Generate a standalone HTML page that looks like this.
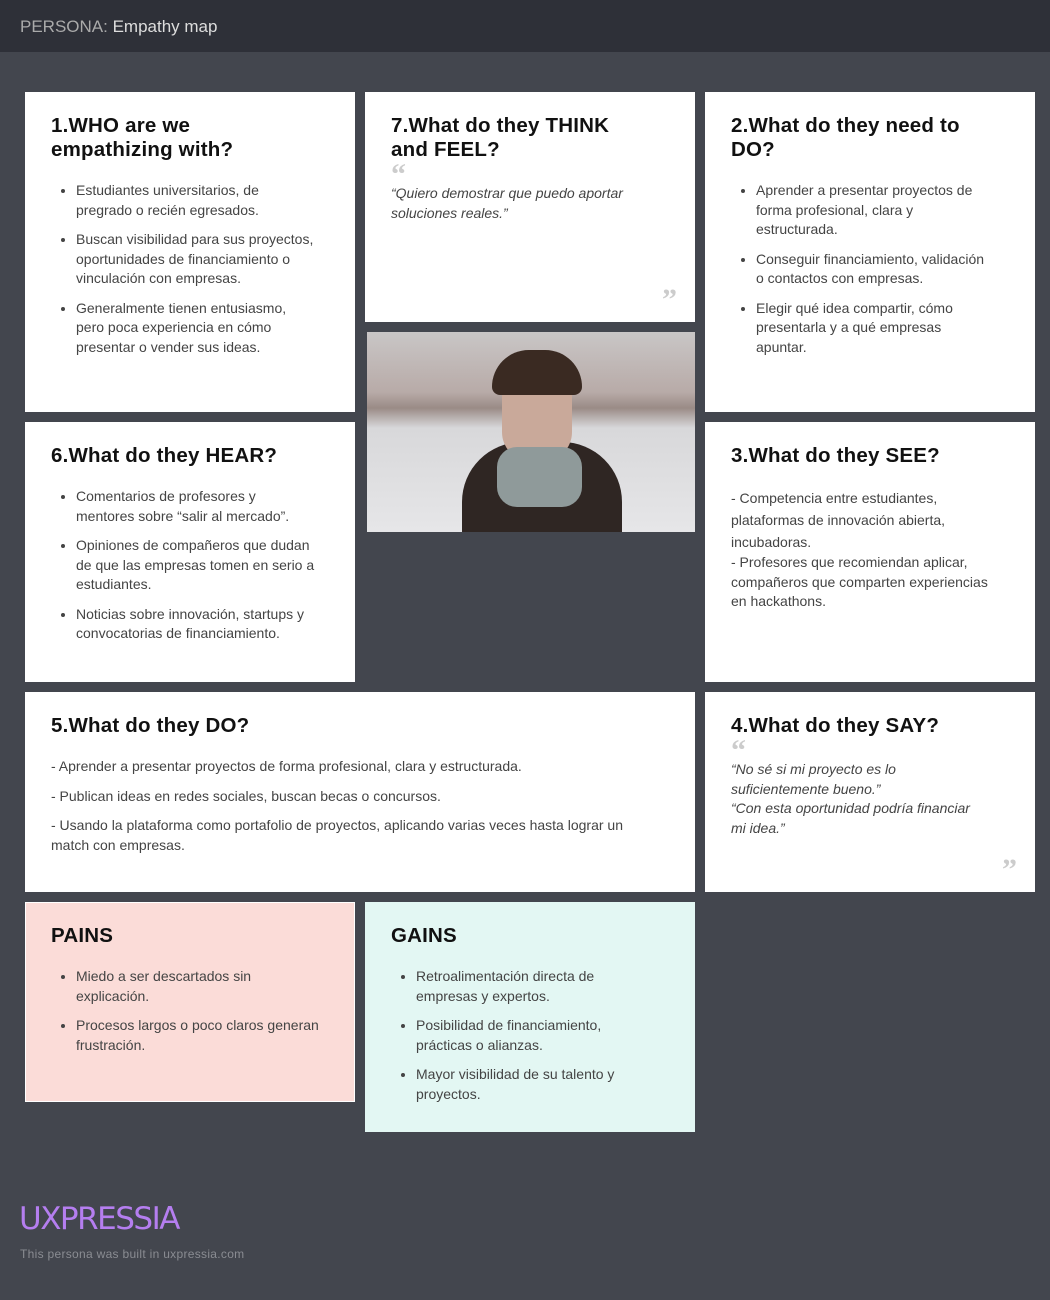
<!DOCTYPE html>
<html><head><meta charset="utf-8"><style>
*{margin:0;padding:0;box-sizing:border-box}
body{width:1050px;height:1300px;background:#43464e;font-family:"Liberation Sans",sans-serif;position:relative;overflow:hidden}
.hdr{position:absolute;left:0;top:0;width:1050px;height:52px;background:#2e3038;color:#ddd;font-size:17px;padding:17px 20px}
.hdr span{color:#aaa}
.c{position:absolute;background:#fff;padding:22px 26px;white-space:nowrap}
.c h2{font-size:20.5px;font-weight:bold;color:#111;line-height:24px;margin-bottom:19px;letter-spacing:0.2px}
.c ul{padding-left:25px;font-size:14px;color:#444;line-height:19.5px}
.c li{margin-bottom:10px}
.c p{font-size:14px;color:#444;line-height:19.5px}
.q{font-style:italic}
.qm{color:#ccc;font-size:30px;font-family:"Liberation Serif",serif;line-height:14px;height:16px;font-weight:bold;margin-top:2px}
.qe{position:absolute;right:18px;bottom:12px;color:#ccc;font-size:30px;font-family:"Liberation Serif",serif;font-weight:bold;line-height:20px}
</style></head><body>
<div class="hdr"><span>PERSONA:</span> Empathy map</div>
<div class="c" style="left:25px;top:92px;width:330px;height:320px"><h2>1.WHO are we<br>empathizing with?</h2><ul><li>Estudiantes universitarios, de<br>pregrado o recién egresados.</li><li>Buscan visibilidad para sus proyectos,<br>oportunidades de financiamiento o<br>vinculación con empresas.</li><li>Generalmente tienen entusiasmo,<br>pero poca experiencia en cómo<br>presentar o vender sus ideas.</li></ul></div>
<div class="c" style="left:365px;top:92px;width:330px;height:230px"><h2 style="margin-bottom:6px">7.What do they THINK<br>and FEEL?</h2><div class="qm">“</div><p class="q">“Quiero demostrar que puedo aportar<br>soluciones reales.”</p><div class="qe">”</div></div>
<div style="position:absolute;left:367px;top:332px;width:328px;height:200px;background:linear-gradient(180deg,#c9c6c6 0%,#b8aba8 30%,#9a8b86 38%,#d8d8da 48%,#e6e6e8 100%);overflow:hidden">
<div style="position:absolute;left:95px;top:110px;width:160px;height:110px;background:#2f2623;border-radius:60px 60px 0 0"></div>
<div style="position:absolute;left:135px;top:30px;width:70px;height:100px;background:#c9a99a;border-radius:35px 35px 30px 30px"></div>
<div style="position:absolute;left:125px;top:18px;width:90px;height:45px;background:#3a2a22;border-radius:45px 45px 10px 10px"></div>
<div style="position:absolute;left:130px;top:115px;width:85px;height:60px;background:#8f9a9a;border-radius:20px"></div>
</div>
<div class="c" style="left:705px;top:92px;width:330px;height:320px"><h2>2.What do they need to<br>DO?</h2><ul><li>Aprender a presentar proyectos de<br>forma profesional, clara y<br>estructurada.</li><li>Conseguir financiamiento, validación<br>o contactos con empresas.</li><li>Elegir qué idea compartir, cómo<br>presentarla y a qué empresas<br>apuntar.</li></ul></div>
<div class="c" style="left:25px;top:422px;width:330px;height:260px"><h2>6.What do they HEAR?</h2><ul><li>Comentarios de profesores y<br>mentores sobre “salir al mercado”.</li><li>Opiniones de compañeros que dudan<br>de que las empresas tomen en serio a<br>estudiantes.</li><li>Noticias sobre innovación, startups y<br>convocatorias de financiamiento.</li></ul></div>
<div class="c" style="left:705px;top:422px;width:330px;height:260px"><h2>3.What do they SEE?</h2><p><span style="line-height:22px">- Competencia entre estudiantes,<br>plataformas de innovación abierta,<br>incubadoras.</span><br>- Profesores que recomiendan aplicar,<br>compañeros que comparten experiencias<br>en hackathons.</p></div>
<div class="c" style="left:25px;top:692px;width:670px;height:200px"><h2>5.What do they DO?</h2><p style="margin-bottom:10px">- Aprender a presentar proyectos de forma profesional, clara y estructurada.</p><p style="margin-bottom:10px">- Publican ideas en redes sociales, buscan becas o concursos.</p><p>- Usando la plataforma como portafolio de proyectos, aplicando varias veces hasta lograr un<br>match con empresas.</p></div>
<div class="c" style="left:705px;top:692px;width:330px;height:200px"><h2 style="margin-bottom:6px">4.What do they SAY?</h2><div class="qm">“</div><p class="q">“No sé si mi proyecto es lo<br>suficientemente bueno.”<br>“Con esta oportunidad podría financiar<br>mi idea.”</p><div class="qe">”</div></div>
<div class="c" style="left:25px;top:902px;width:330px;height:200px;background:#fbdcd8;border:1px solid #fff;padding:21px 25px"><h2>PAINS</h2><ul><li>Miedo a ser descartados sin<br>explicación.</li><li>Procesos largos o poco claros generan<br>frustración.</li></ul></div>
<div class="c" style="left:365px;top:902px;width:330px;height:230px;background:#e3f7f3"><h2>GAINS</h2><ul><li>Retroalimentación directa de<br>empresas y expertos.</li><li>Posibilidad de financiamiento,<br>prácticas o alianzas.</li><li>Mayor visibilidad de su talento y<br>proyectos.</li></ul></div>
<div style="position:absolute;left:19px;top:1201px;color:#b57ef0;font-size:31px;letter-spacing:-1.5px;font-family:'DejaVu Sans',sans-serif">UXPRESSIA</div>
<div style="position:absolute;left:20px;top:1247px;color:#8a8c92;font-size:12px;letter-spacing:0.3px">This persona was built in uxpressia.com</div>
</body></html>
